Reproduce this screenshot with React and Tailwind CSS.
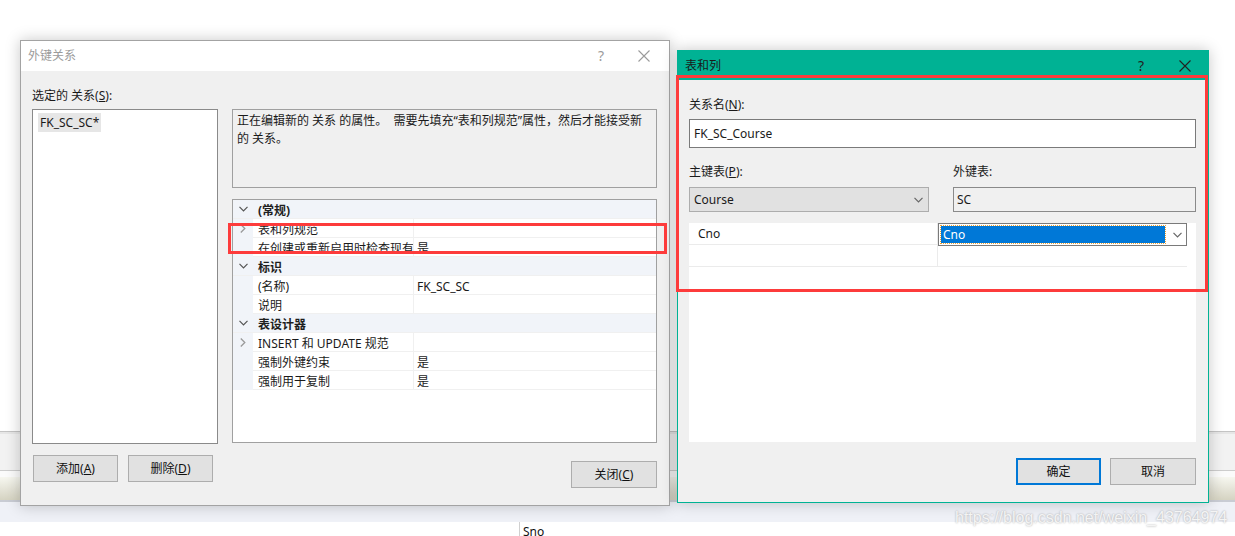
import React from 'react';

const rows = [
  { cat: true, name: '(常规)' },
  { name: '表和列规范', expand: true, value: '' },
  { name: '在创建或重新启用时检查现有数据', value: '是' },
  { cat: true, name: '标识' },
  { name: '(名称)', value: 'FK_SC_SC' },
  { name: '说明', value: '' },
  { cat: true, name: '表设计器' },
  { name: 'INSERT 和 UPDATE 规范', expand: true, value: '' },
  { name: '强制外键约束', value: '是' },
  { name: '强制用于复制', value: '是' },
];

function Down({ color = '#555' }) {
  return (
    <svg width="9" height="6" viewBox="0 0 9 6" fill="none">
      <path d="M0.5 0.8 L4.5 4.8 L8.5 0.8" stroke={color} strokeWidth="1.2" />
    </svg>
  );
}

function Right() {
  return (
    <svg width="6" height="9" viewBox="0 0 6 9" fill="none">
      <path d="M0.8 0.5 L4.8 4.5 L0.8 8.5" stroke="#9a9a9a" strokeWidth="1.3" />
    </svg>
  );
}

function Close({ color }) {
  return (
    <svg width="12" height="12" viewBox="0 0 12 12" fill="none">
      <path d="M0.5 0.5 L11.5 11.5 M11.5 0.5 L0.5 11.5" stroke={color} strokeWidth="1.1" />
    </svg>
  );
}

function Btn({ children, w = 'w-[85px]', primary }) {
  return (
    <div
      className={`${w} h-[27px] flex items-center justify-center bg-[#e1e1e1] text-[12px] text-[#111] ${
        primary ? 'border-2 border-[#0078d7]' : 'border border-[#adadad]'
      }`}
    >
      {children}
    </div>
  );
}

function PropGrid() {
  return (
    <div className="h-[244px] border border-[#a0a0a0] bg-white flex flex-col">
      {rows.map((r, i) =>
        r.cat ? (
          <div key={i} className="h-[19px] flex bg-[#f1f4f9] border-b border-[#f0f0f0]">
            <div className="w-[20px] flex items-center justify-center">
              <Down />
            </div>
            <div className="pl-[5px] pt-[2px] font-bold text-[#1e1e1e]">{r.name}</div>
          </div>
        ) : (
          <div key={i} className="h-[19px] flex">
            <div className="w-[20px] bg-[#f1f4f9] flex items-center justify-center">{r.expand && <Right />}</div>
            <div className="w-[161px] pl-[5px] pt-[2px] overflow-hidden whitespace-nowrap border-b border-r border-[#f0f0f0]">
              {r.name}
            </div>
            <div className="flex-1 pl-[3px] pt-[2px] border-b border-[#f0f0f0]">{r.value}</div>
          </div>
        )
      )}
    </div>
  );
}

export default function App() {
  return (
    <div className="relative w-[1235px] h-[536px] overflow-hidden bg-white text-[12px] leading-[18px] text-[#1a1a1a] font-['Noto_Sans','Noto_Sans_CJK_SC',sans-serif]">
      {/* background window behind the dialogs */}
      <div className="flex flex-col">
        <div className="h-[431px] bg-white" />
        <div className="h-px bg-[#c4c4c4]" />
        <div className="h-[2px] bg-[#e6e6e6]" />
        <div className="h-[36px] bg-[#f2f2f2]" />
        <div className="h-px bg-[#cdcdcd]" />
        <div className="h-[6px] bg-[#fbfbfb]" />
        <div className="h-[23px] bg-gradient-to-b from-[#f7f7f0] to-[#d5d3c2]" />
        <div className="h-[2px] bg-[#c9ccd4]" />
        <div className="h-[20px] bg-[#eff1f7]" />
        <div className="flex h-[14px]">
          <div className="w-[519px] bg-white" />
          <div className="w-px bg-[#d0d0d0]" />
          <div className="pl-[3px] leading-[20px] text-[#111]">Sno</div>
        </div>
      </div>

      {/* 外键关系 dialog */}
      <div className="absolute left-[20px] top-[40px] w-[650px] h-[466px] border border-[#a3a3a3] shadow-[0_0_14px_rgba(0,0,0,0.22)] flex flex-col">
        <div className="h-[30px] bg-white flex items-center pl-[7px] pr-[19px]">
          <div className="flex-1 text-[#9b9b9b]">外键关系</div>
          <div className="text-[#9b9b9b] text-[14px] mr-[34px]">?</div>
          <Close color="#9b9b9b" />
        </div>
        <div className="flex-1 bg-[#f0f0f0] px-[11px] pt-[16px]">
          <div className="h-[18px] mb-[4px]">
            选定的 关系(<u>S</u>):
          </div>
          <div className="flex gap-[14px]">
            <div className="w-[186px]">
              <div className="h-[335px] border border-[#8a8a8a] bg-white p-[3px] pl-[5px]">
                <div className="inline-block bg-[#e6e6e6] px-[2px] leading-[19px]">FK_SC_SC*</div>
              </div>
              <div className="flex gap-[10px] mt-[11px] ml-[1px]">
                <Btn>
                  添加(<u>A</u>)
                </Btn>
                <Btn>
                  删除(<u>D</u>)
                </Btn>
              </div>
            </div>
            <div className="w-[425px]">
              <div className="h-[79px] border border-[#a0a0a0] bg-[#f0f0f0] px-[4px] py-[2px] whitespace-nowrap">
                <div>正在编辑新的 关系 的属性。 &nbsp;需要先填充“表和列规范”属性，然后才能接受新</div>
                <div>的 关系。</div>
              </div>
              <div className="mt-[11px]">
                <PropGrid />
              </div>
              <div className="mt-[18px] flex justify-end">
                <Btn w="w-[86px]">
                  关闭(<u>C</u>)
                </Btn>
              </div>
            </div>
          </div>
        </div>
      </div>

      {/* 表和列 dialog */}
      <div className="absolute left-[677px] top-[50px] w-[532px] h-[453px] border border-[#00b294] shadow-[0_0_14px_rgba(0,0,0,0.22)] flex flex-col">
        <div className="h-[29px] bg-[#00b294] flex items-center pl-[7px] pr-[17px]">
          <div className="flex-1 text-[#1a1a1a]">表和列</div>
          <div className="text-[14px] text-[#222] mr-[35px]">?</div>
          <Close color="#222" />
        </div>
        <div className="flex-1 bg-[#f0f0f0] pl-[11px] pr-[12px] pt-[16px]">
          <div className="h-[18px]">
            关系名(<u>N</u>):
          </div>
          <div className="mt-[5px] h-[29px] border border-[#7a7a7a] bg-white pl-[4px] flex items-center">FK_SC_Course</div>
          <div className="mt-[15px] grid grid-cols-[240px_1fr] gap-x-[24px]">
            <div className="h-[18px]">
              主键表(<u>P</u>):
            </div>
            <div className="h-[18px]">外键表:</div>
            <div className="mt-[6px] h-[25px] border border-[#adadad] bg-[#e1e1e1] pl-[4px] pr-[5px] flex items-center justify-between">
              <span>Course</span>
              <Down color="#666" />
            </div>
            <div className="mt-[6px] h-[25px] border border-[#8a8a8a] bg-[#f0f0f0] pl-[3px] flex items-center">SC</div>
          </div>
          <div className="mt-[11px] h-[219px] bg-white">
            <div className="w-[498px]">
              <div className="flex h-[22px] border-b border-[#ebebeb]">
                <div className="w-[249px] pl-[9px] flex items-center border-r border-[#ebebeb]">Cno</div>
                <div className="flex-1 h-[23px] border border-[#7a7a7a] bg-white flex items-center pl-[2px] pr-[4px] gap-[8px]">
                  <div className="flex-1 h-[17px] bg-[#0078d7] outline-1 outline-dotted outline-[#f0a030] text-white pl-[2px] flex items-center">
                    Cno
                  </div>
                  <Down color="#666" />
                </div>
              </div>
              <div className="flex h-[22px] border-b border-[#ebebeb]">
                <div className="w-[249px] border-r border-[#ebebeb]" />
                <div className="flex-1" />
              </div>
            </div>
          </div>
          <div className="mt-[16px] flex justify-end gap-[9px]">
            <Btn primary>确定</Btn>
            <Btn w="w-[86px]">取消</Btn>
          </div>
        </div>
      </div>

      {/* red highlight frames */}
      <div className="absolute left-[228px] top-[223px] w-[439px] h-[31px] border-[3px] border-[#fd3b3b]" />
      <div className="absolute left-[676px] top-[75px] w-[532px] h-[217px] border-[3px] border-[#fd3b3b]" />

      {/* watermark */}
      <div className="absolute left-[955px] top-[507px] text-[16px] leading-[22px] font-['Liberation_Sans',sans-serif] text-[#f4f4f4] [text-shadow:0_0_2px_rgba(0,0,0,0.35)]">
        https://blog.csdn.net/weixin_43764974
      </div>
    </div>
  );
}
